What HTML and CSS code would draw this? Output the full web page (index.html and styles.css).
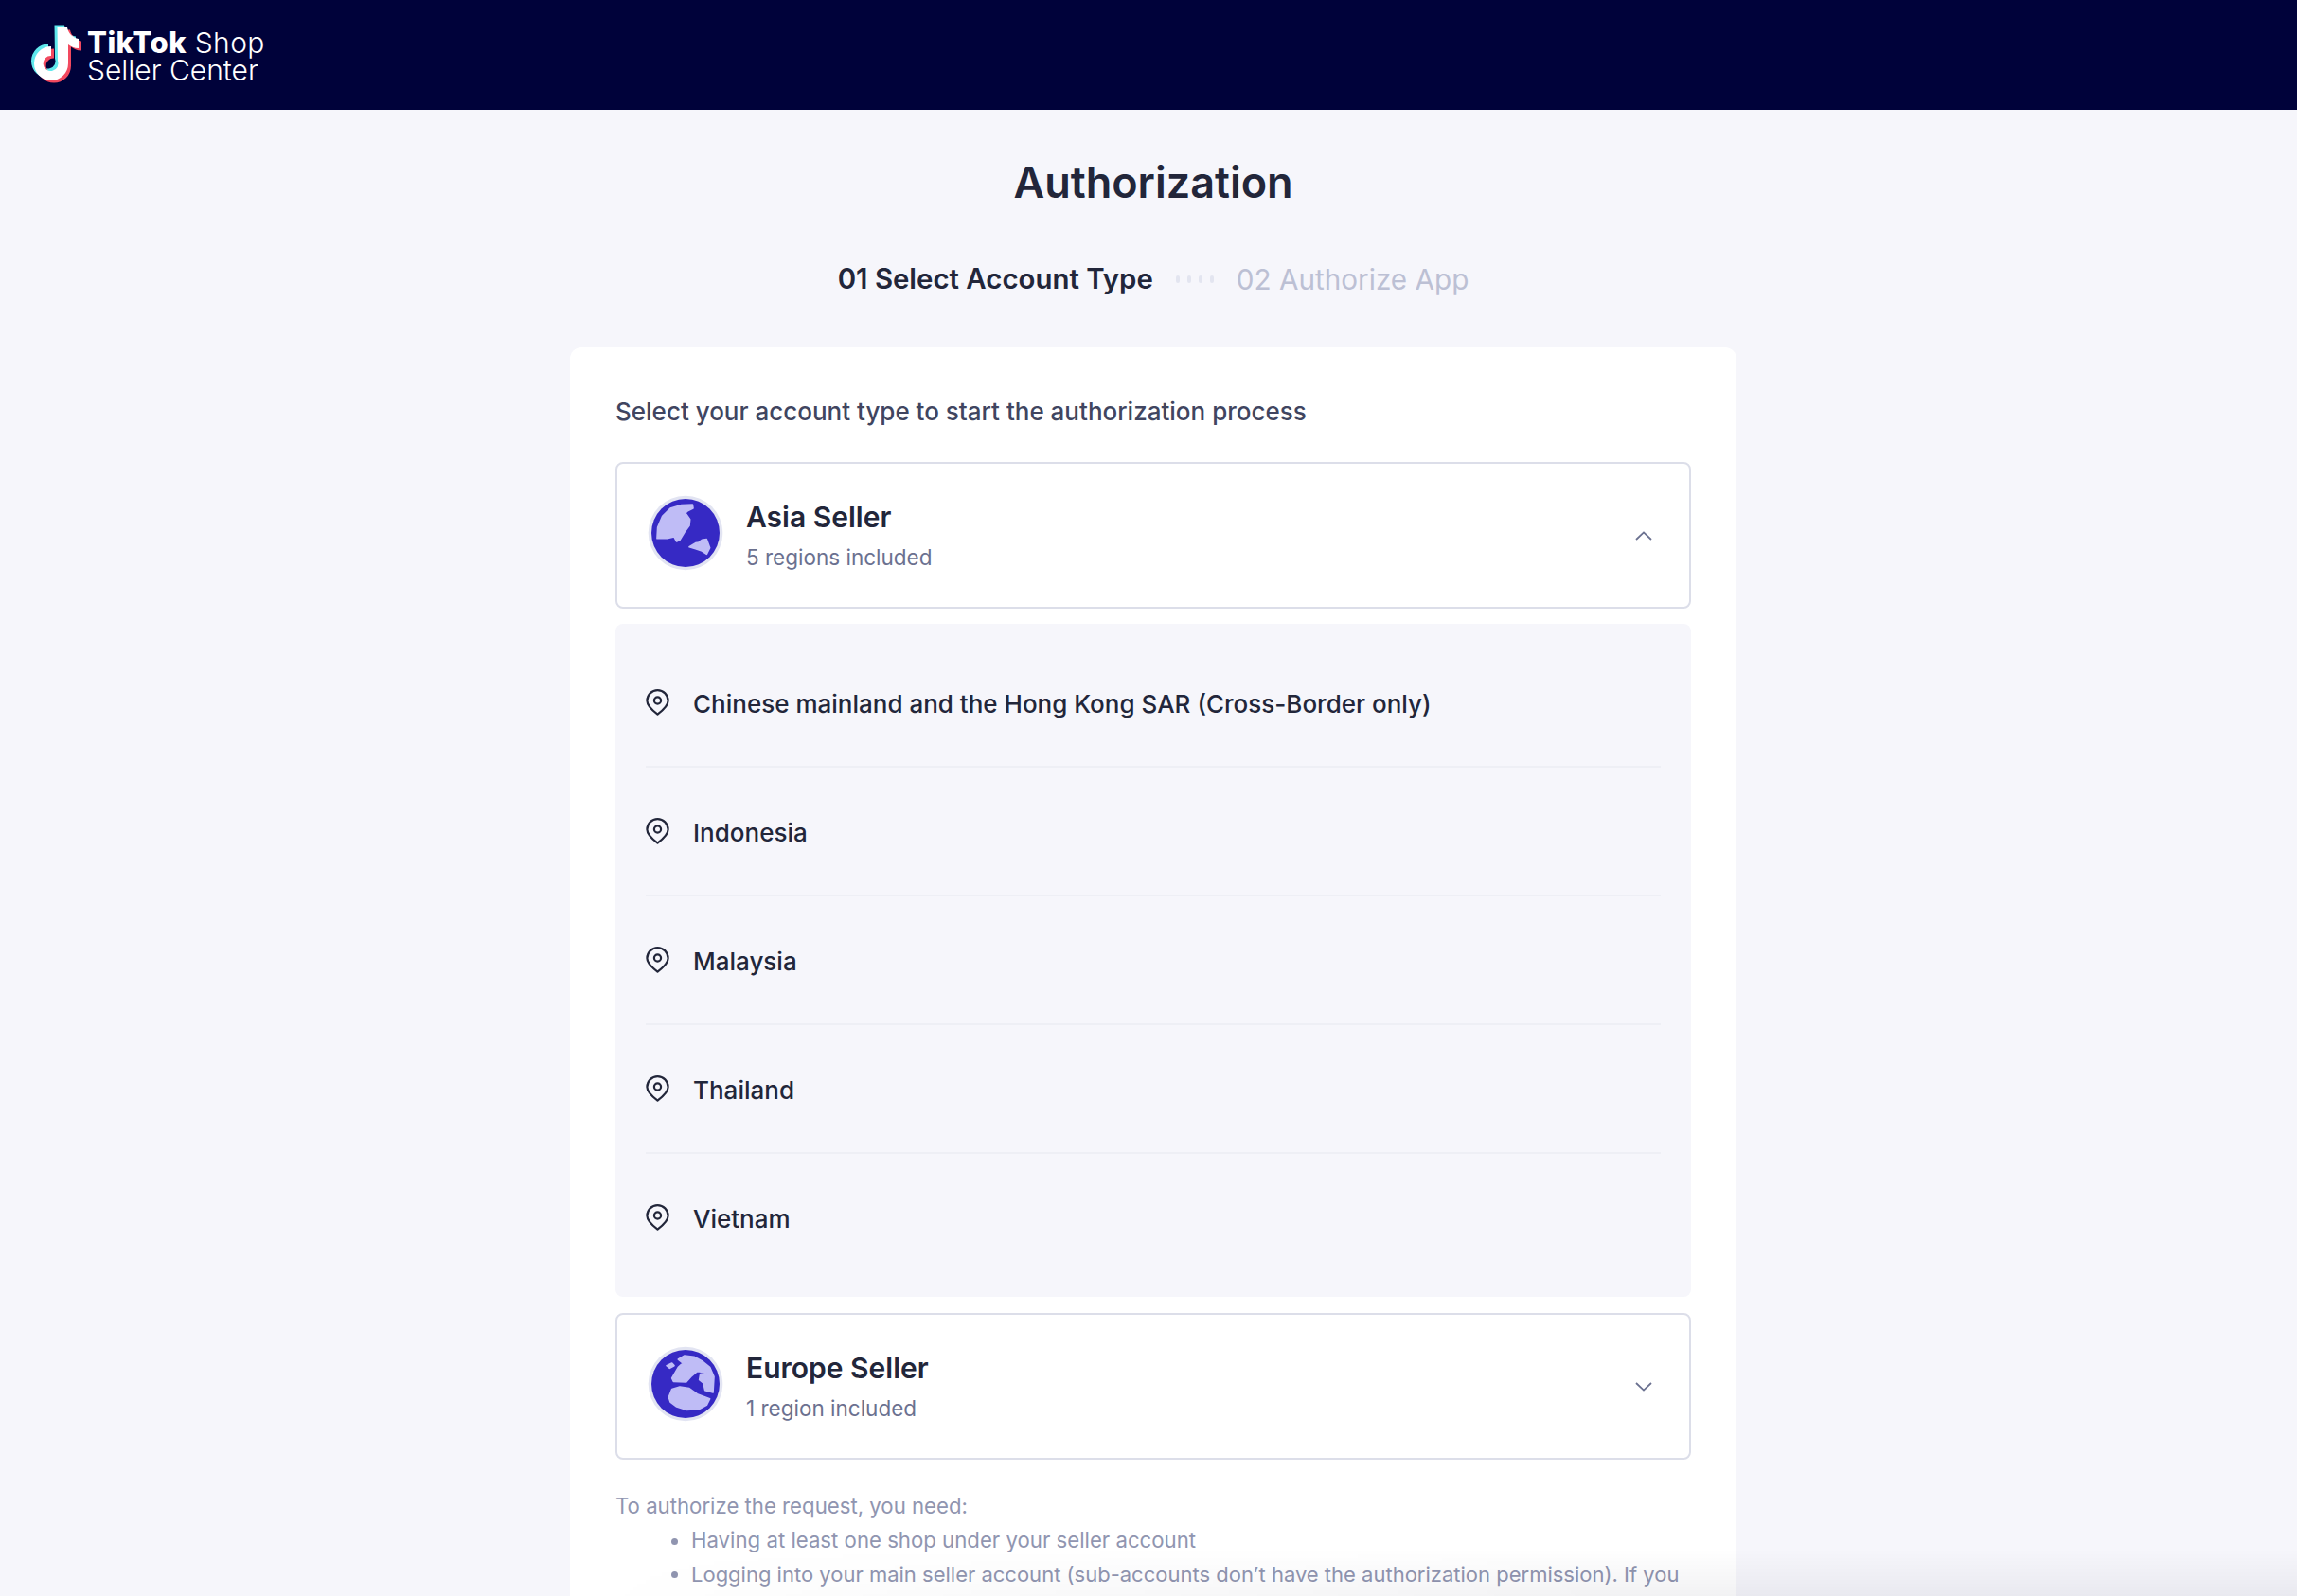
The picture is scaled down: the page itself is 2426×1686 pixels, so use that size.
FILE: index.html
```html
<!DOCTYPE html>
<html lang="en">
<head>
    <meta charset="UTF-8">
    <meta name="viewport" content="width=device-width, initial-scale=1.0">
    <link rel="stylesheet" href="styles.css">
    <title>Authorization</title>
</head>
<body>
    <svg class="defs" width="0" height="0">
        <defs>
            <path id="note" d="M30 4H41C42 10 47 15 53 16V26C48 26 45 24 42 22V42A18 18 0 1 1 24 24V34A8 8 0 1 0 31 39L30.5 4Z"/>
            <symbol id="pin" viewBox="0 0 25 28">
                <path d="M12.5 26.6C8 23.2 1.4 18.2 1.4 12.2a11.1 11.1 0 0 1 22.2 0c0 6-6.6 11-11.1 14.4z" fill="none" stroke="#22263a" stroke-width="2.2" stroke-linejoin="round"/>
                <circle cx="12.5" cy="12" r="3.6" fill="none" stroke="#22263a" stroke-width="2.2"/>
            </symbol>
        </defs>
    </svg>

    <header class="topbar">
        <a class="logo">
            <svg class="logo-note" viewBox="0 0 60 66">
                <use href="#note" fill="#5fe8ec" transform="translate(-3 -2.5)"/>
                <use href="#note" fill="#f2495f" transform="translate(3 2.5)"/>
                <use href="#note" fill="#ffffff"/>
            </svg>
            <span class="logo-text">
                <span class="logo-line"><b>TikTok</b> Shop</span>
                <span class="logo-line logo-sub">Seller Center</span>
            </span>
        </a>
    </header>

    <main class="page">
        <h1 class="title">Authorization</h1>

        <div class="steps">
            <span class="step active">01 Select Account Type</span>
            <span class="dots"><i></i><i></i><i></i><i></i></span>
            <span class="step">02 Authorize App</span>
        </div>

        <section class="card">
            <p class="intro">Select your account type to start the authorization process</p>

            <div class="seller">
                <svg class="globe" viewBox="8 8 240 240">
                    <circle cx="128" cy="128" r="118" fill="#e2e4f2"/>
                    <circle cx="128" cy="128" r="108" fill="#3629c4"/>
                    <path class="land" d="M150 38L152 50 135 58 128 65 142 85 140 105 125 125 110 150 100 155 92 140 70 145 38 145 40 110 55 75 80 50 115 40Z"/>
                    <path class="land" d="M140 172L160 160 170 158 180 150 195 148 205 175 195 195 180 185 160 178Z"/>
                </svg>
                <div class="seller-info">
                    <div class="seller-name">Asia Seller</div>
                    <div class="seller-sub">5 regions included</div>
                </div>
                <svg class="chevron" viewBox="0 0 18 10"><path d="M1 9l8-7.6L17 9" fill="none" stroke="#6b7190" stroke-width="1.8"/></svg>
            </div>

            <ul class="regions">
                <li class="region"><svg class="pin"><use href="#pin"/></svg>Chinese mainland and the Hong Kong SAR (Cross-Border only)</li>
                <li class="region"><svg class="pin"><use href="#pin"/></svg>Indonesia</li>
                <li class="region"><svg class="pin"><use href="#pin"/></svg>Malaysia</li>
                <li class="region"><svg class="pin"><use href="#pin"/></svg>Thailand</li>
                <li class="region"><svg class="pin"><use href="#pin"/></svg>Vietnam</li>
            </ul>

            <div class="seller">
                <svg class="globe" viewBox="8 8 240 240">
                    <circle cx="128" cy="128" r="118" fill="#e2e4f2"/>
                    <circle cx="128" cy="128" r="108" fill="#3629c4"/>
                    <path class="land" d="M68 70L85 62 92 70 78 78Z"/>
                    <path class="land" d="M85 110L90 120 130 122 145 105 165 88 197 92 175 97 172 115 185 125 190 148 215 155 218 105 205 75 180 55 155 42 125 38 105 50 120 62 105 75Z"/>
                    <path class="land" d="M75 170L85 145 110 137 140 142 165 160 205 175 195 195 170 208 130 210 100 200 80 185Z"/>
                </svg>
                <div class="seller-info">
                    <div class="seller-name">Europe Seller</div>
                    <div class="seller-sub">1 region included</div>
                </div>
                <svg class="chevron" viewBox="0 0 18 10"><path d="M1 1l8 7.6L17 1" fill="none" stroke="#6b7190" stroke-width="1.8"/></svg>
            </div>

            <div class="notes">
                <p>To authorize the request, you need:</p>
                <ul>
                    <li>Having at least one shop under your seller account</li>
                    <li>Logging into your main seller account (sub-accounts don’t have the authorization permission). If you</li>
                </ul>
            </div>
        </section>
    </main>

    <div class="bottom-fade"></div>
</body>
</html>
```

FILE: styles.css
```css
html, body {
  height: 100%;
  overflow: hidden;
}

body {
  font-family: 'Inter', 'Liberation Sans', sans-serif;
  margin: 0;
  padding: 0;
  background-color: #f6f6fb;
  color: #22263a;
}

.defs {
  display: block;
  height: 0;
}

.topbar {
  height: 116px;
  background-color: #00023a;
  display: flex;
  align-items: center;
  padding-left: 30px;
}

.logo {
  display: flex;
  align-items: center;
  color: #ffffff;
  gap: 2px;
}

.logo-note {
  width: 60px;
  height: 66px;
}

.logo-text {
  display: flex;
  flex-direction: column;
  font-size: 30px;
  font-weight: 300;
  letter-spacing: 0.4px;
  line-height: 29px;
  padding-top: 2px;
}

.logo-line b {
  font-size: 31px;
  font-weight: 800;
}

.logo-sub {
  letter-spacing: 0;
}

.page {
  display: flex;
  flex-direction: column;
  align-items: center;
  padding-left: 10px;
}

.title {
  margin: 47px 0 0;
  font-size: 45px;
  line-height: 60px;
  font-weight: 600;
}

.steps {
  display: flex;
  align-items: center;
  margin-top: 52px;
  font-size: 29.7px;
  line-height: 40px;
  color: #bcc0d4;
}

.step.active {
  color: #22263a;
  font-size: 29.4px;
  font-weight: 600;
}

.dots {
  display: flex;
  gap: 8px;
  margin: 0 24px;
}

.dots i {
  width: 4px;
  height: 8px;
  border-radius: 2px;
  background-color: #e3e5f0;
}

.card {
  width: 1232px;
  box-sizing: border-box;
  margin-top: 52px;
  padding: 48px 48px 60px;
  background-color: #ffffff;
  border-radius: 12px;
}

.intro {
  margin: 0 0 33px;
  font-size: 26px;
  line-height: 40px;
  font-weight: 500;
  color: #404560;
}

.seller {
  display: flex;
  align-items: center;
  height: 155px;
  box-sizing: border-box;
  padding: 0 39px 0 32px;
  border: 2px solid #dcdee9;
  border-radius: 8px;
}

.globe {
  width: 80px;
  height: 80px;
  margin: 0 24px 6px 0;
}

.land {
  fill: #bfbcf6;
  stroke: #bfbcf6;
  stroke-width: 5;
  stroke-linejoin: round;
}

.seller-info {
  flex: 1;
}

.seller-name {
  font-size: 30px;
  line-height: 40px;
  font-weight: 600;
}

.seller-sub {
  margin-top: 7px;
  font-size: 22.5px;
  line-height: 32px;
  color: #6b7190;
}

.chevron {
  width: 18px;
  height: 10px;
}

.regions {
  list-style: none;
  margin: 16px 0 17px;
  padding: 16px 32px 15px;
  background-color: #f6f6fb;
  border-radius: 8px;
}

.region {
  display: flex;
  align-items: center;
  gap: 25px;
  height: 136px;
  box-sizing: border-box;
  padding-top: 3px;
  border-bottom: 2px solid #eeeff5;
  font-size: 26px;
  font-weight: 500;
}

.region:last-child {
  border-bottom-color: transparent;
}

.pin {
  width: 25px;
  height: 28px;
  margin-top: -4px;
}

.notes {
  margin-top: 31px;
  font-size: 22.2px;
  line-height: 36px;
  color: #9095b0;
}

.notes p {
  margin: 0;
}

.notes ul {
  margin: 0;
  padding-left: 80px;
}

.notes li:last-child {
  font-size: 22px;
}

/* soft shadow rising from the lower right corner */
.bottom-fade {
  position: fixed;
  left: 620px;
  right: 0;
  bottom: 0;
  height: 50px;
  background: linear-gradient(to bottom, rgba(0, 0, 30, 0), rgba(0, 0, 30, 0.05));
  -webkit-mask-image: linear-gradient(to right, transparent, #000 60%);
  mask-image: linear-gradient(to right, transparent, #000 60%);
}
```
